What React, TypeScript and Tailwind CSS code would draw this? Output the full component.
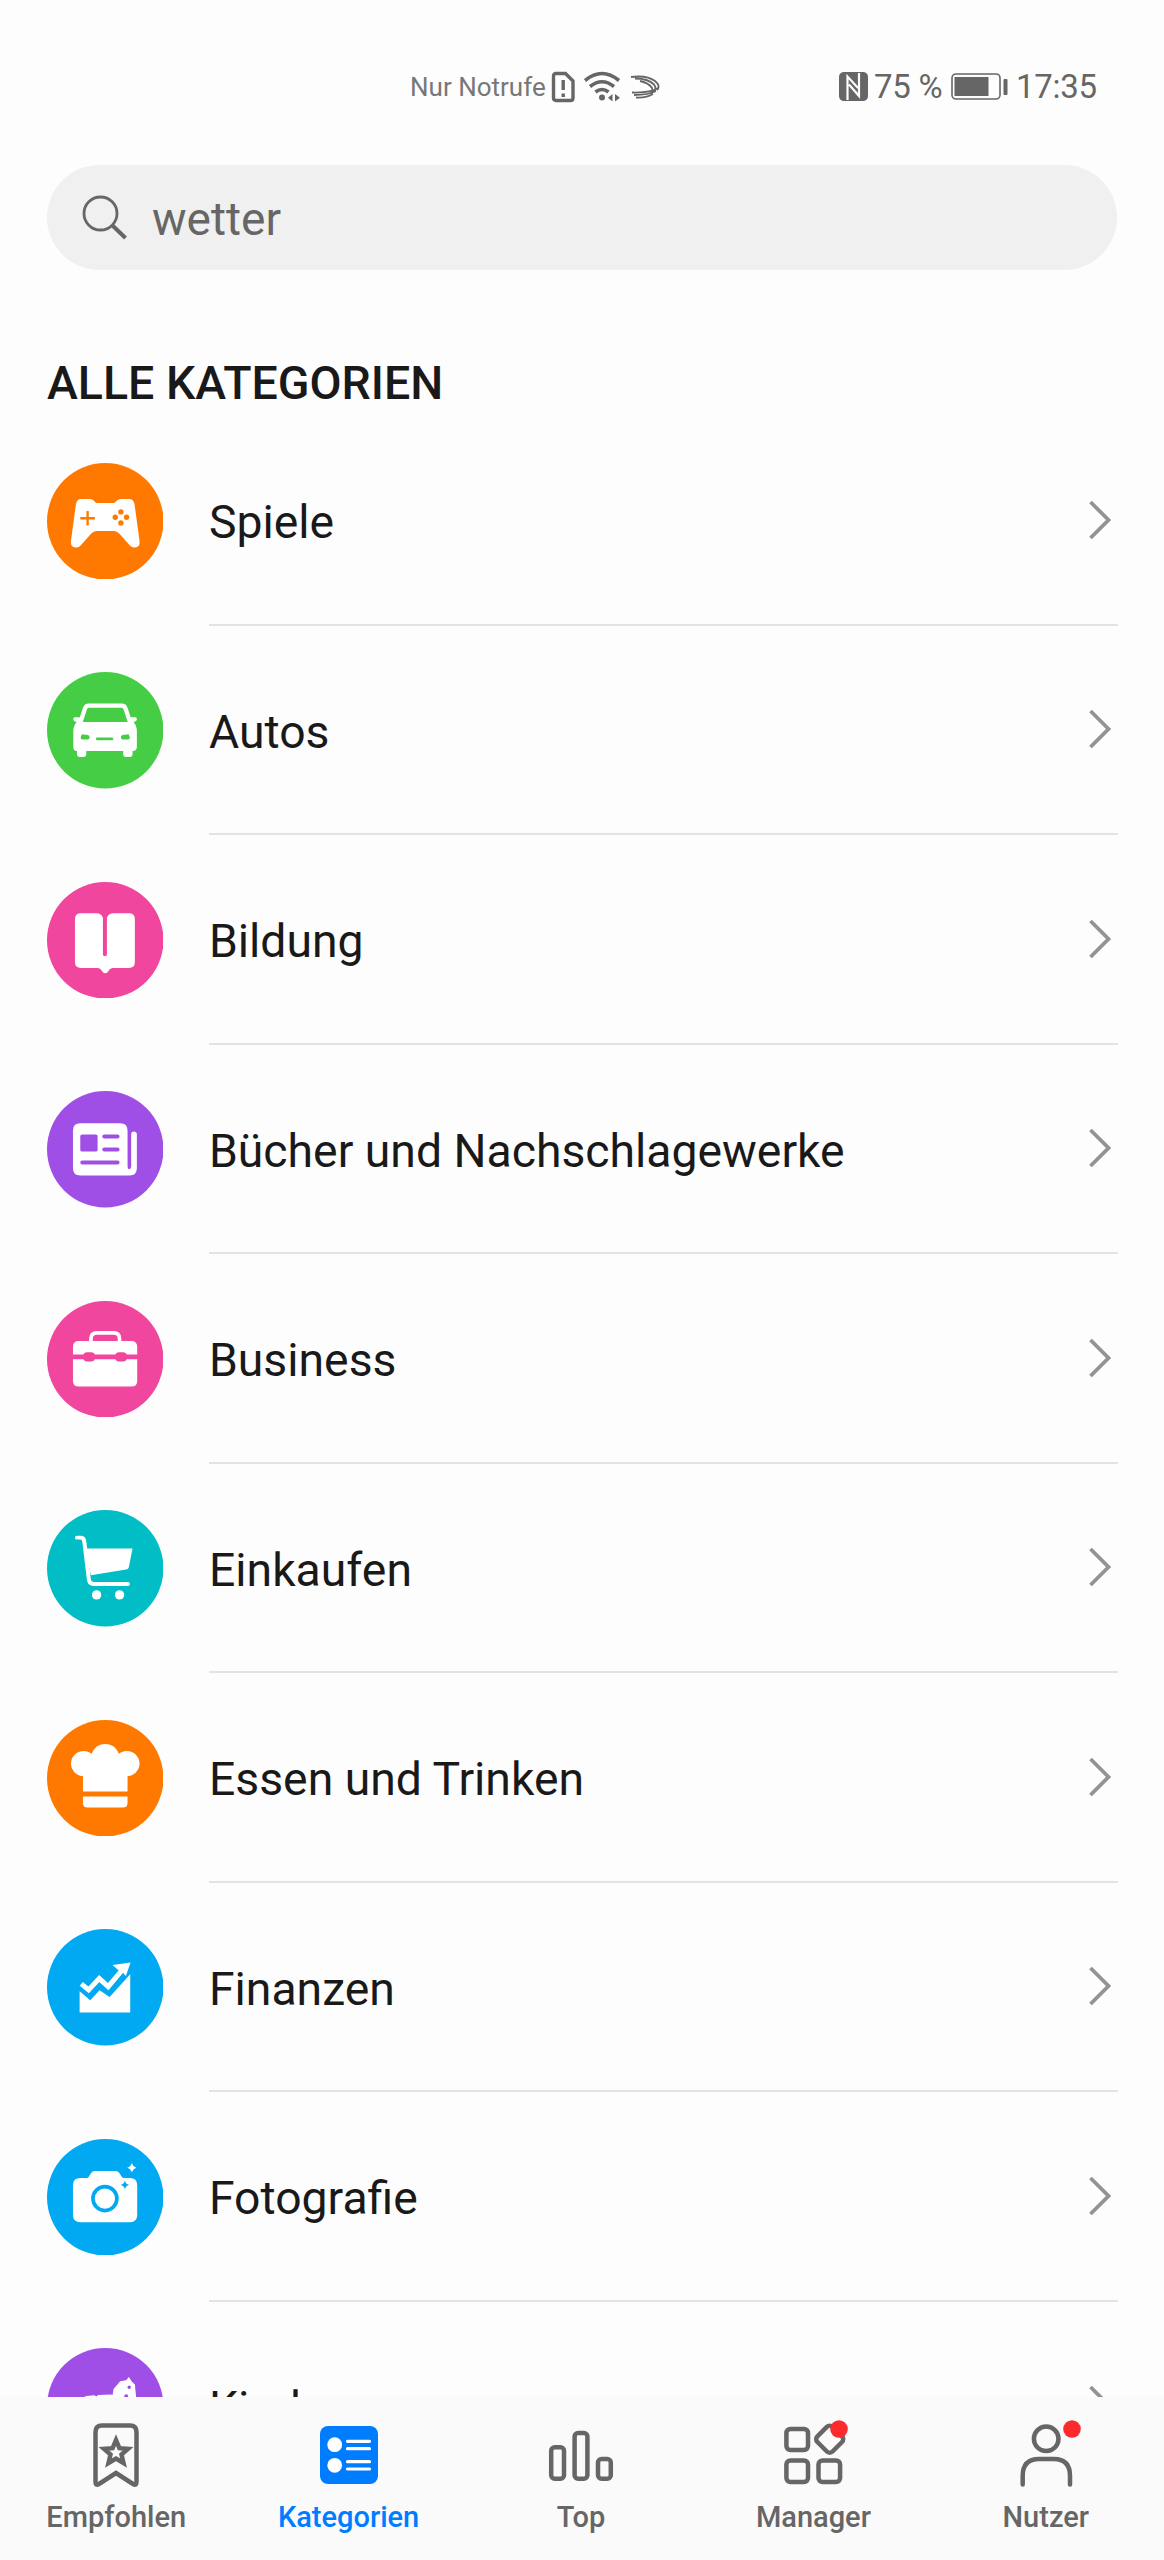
import React from "react";

type Category = {
  name: string;
  color: string;
  icon: React.ReactNode;
};

const categories: Category[] = [
  {
    name: "Spiele",
    color: "text-[#ff7900]",
    icon: (
      <>
        <path
          fill="#fff"
          d="M102 108h28q8 0 13 8q2 4 7 4h50q5 0 7-4q5-8 13-8h26q14 0 17 16l15 110q2 20-16 20-8 0-13-6l-32-36q-7-8-15-8h-54q-8 0-15 8l-32 36q-5 6-13 6-18 0-16-20l15-110q3-16 15-16z"
        />
        <path d="M100 166h44M122 144v44" stroke="currentColor" strokeWidth="7" />
        <g fill="currentColor">
          <circle cx="222" cy="147" r="8" />
          <circle cx="205" cy="163" r="8" />
          <circle cx="239" cy="163" r="8" />
          <circle cx="222" cy="180" r="8" />
        </g>
      </>
    ),
  },
  {
    name: "Autos",
    color: "text-[#46cd46]",
    icon: (
      <>
        <path
          d="M100 152l14-42q3-9 11-9h100q8 0 11 9l14 42"
          fill="none"
          stroke="#fff"
          strokeWidth="13"
        />
        <path
          fill="#fff"
          d="M84 136h14l4 14h146l4-14h14q4 0 4 5t-4 7l-6 3q10 10 10 28v46q0 12-13 12v11q0 7-7 7h-14q-7 0-7-7v-11H118v11q0 7-7 7H97q-7 0-7-7v-11q-11 0-11-12v-46q0-18 10-28l-6-3q-4-2-4-7t5-5z"
        />
        <path fill="currentColor" d="M105 187l18 2q5 1 5 7t-5 7h-16q-6 0-6-7zM245 187l-18 2q-5 1-5 7t5 7h16q6 0 6-7z" />
        <path d="M151 201h44" stroke="currentColor" strokeWidth="8" strokeLinecap="round" />
      </>
    ),
  },
  {
    name: "Bildung",
    color: "text-[#f0469e]",
    icon: (
      <path
        fill="#fff"
        d="M102 94h46q16 0 20 14v109q0 6 6 6t6-6v-109q4-14 20-14h46q18 0 18 18v128q0 18-18 18h-48q-7 0-10 5l-6 8q-7 7-14 0l-6-8q-3-5-10-5h-50q-18 0-18-18v-128q0-18 18-18z"
      />
    ),
  },
  {
    name: "Bücher und Nachschlagewerke",
    color: "text-[#9f4fe6]",
    icon: (
      <>
        <path
          fill="#fff"
          d="M100 97h120q22 0 22 22v108q0 8 5 8t6-8v-97q0-8 8-8t9 8v102q0 22-22 22h-148q-22 0-22-22v-113q0-22 22-22z"
        />
        <rect x="100" y="131" width="52" height="51" rx="5" fill="currentColor" />
        <path
          d="M172 137h40M172 176h40M106 215h106"
          stroke="currentColor"
          strokeWidth="12"
          strokeLinecap="round"
        />
      </>
    ),
  },
  {
    name: "Business",
    color: "text-[#f0469e]",
    icon: (
      <>
        <path
          d="M132 124v-10q0-18 18-18h50q18 0 18 18v10"
          fill="none"
          stroke="#fff"
          strokeWidth="11"
        />
        <path fill="#fff" d="M96 120h157q18 0 18 18v23H78v-23q0-18 18-18z" />
        <path fill="#fff" d="M78 175h193v65q0 17-17 17H95q-17 0-17-17z" />
        <rect x="109" y="154" width="35" height="28" rx="12" fill="currentColor" />
        <rect x="205" y="154" width="35" height="28" rx="12" fill="currentColor" />
      </>
    ),
  },
  {
    name: "Einkaufen",
    color: "text-[#00bdc6]",
    icon: (
      <>
        <path
          d="M90 83h10q11 0 12 11l14 116q2 12 14 12h103"
          fill="none"
          stroke="#fff"
          strokeWidth="12"
          strokeLinecap="round"
        />
        <path fill="#fff" d="M114 116h143l-11 55q-1 7-8 8l-106 17z" />
        <circle cx="149" cy="255" r="14" fill="#fff" />
        <circle cx="218" cy="255" r="14" fill="#fff" />
      </>
    ),
  },
  {
    name: "Essen und Trinken",
    color: "text-[#ff7900]",
    icon: (
      <g fill="#fff">
        <circle cx="110" cy="131" r="38" />
        <circle cx="175" cy="115" r="43" />
        <circle cx="240" cy="131" r="38" />
        <path d="M108 130h134v85H108z" />
        <path d="M108 230h134v19q0 14-14 14H122q-14 0-14-14z" />
      </g>
    ),
  },
  {
    name: "Finanzen",
    color: "text-[#00a9f1]",
    icon: (
      <>
        <path
          d="M103 165l22 18 32-34 27 24 47-56"
          fill="none"
          stroke="#fff"
          strokeWidth="15"
        />
        <path fill="#fff" d="M197 108l54-7-14 40-12-13-13-6z" />
        <path fill="#fff" d="M98 187l32 27 28-30 30 20 62-68v115H98z" />
      </>
    ),
  },
  {
    name: "Fotografie",
    color: "text-[#00a9f1]",
    icon: (
      <>
        <path
          fill="#fff"
          d="M100 117h20q4 0 6-4l6-10q4-7 13-7h60q9 0 13 7l6 10q2 4 6 4h19q22 0 22 22v89q0 22-22 22H100q-22 0-22-22v-89q0-22 22-22z"
        />
        <circle cx="174" cy="179" r="36" fill="none" stroke="currentColor" strokeWidth="11" />
        <path fill="#fff" d="M255 71q3 12 14 15q-11 3-14 15q-3-12-14-15q11-3 14-15z" />
        <path fill="currentColor" d="M234 124q2 12 13 14q-11 2-13 14q-2-12-13-14q11-2 13-14z" />
      </>
    ),
  },
  {
    name: "Kinder",
    color: "text-[#9f4fe6]",
    icon: (
      <>
        <path
          fill="#fff"
          d="M110 148l8-4 24-2 6 4 6-5 38-1 5 1 3-18 20-23 18-3 8-10 8 13 10 10 4 40v60H105z"
        />
        <circle cx="247" cy="118" r="5" fill="currentColor" />
        <circle cx="238" cy="145" r="6" fill="currentColor" />
      </>
    ),
  },
];

const tabs = [
  {
    label: "Empfohlen",
    icon: (
      <>
        <path d="M19 3.5h28q6.5 0 6.5 6.5v50q0 4-3.5 2L33 51 16 62q-3.5 2-3.5-2V10q0-6.5 6.5-6.5z" />
        <path d="M33 18l3.4 8.2 8.6.6-6.5 5.8 2 8.4-7.5-4.5-7.5 4.5 2-8.4-6.5-5.8 8.6-.6z" />
      </>
    ),
  },
  {
    label: "Kategorien",
    active: true,
    icon: (
      <>
        <rect x="4" y="4" width="58" height="58" rx="8" fill="currentColor" stroke="none" />
        <circle cx="18.7" cy="22.7" r="7.4" fill="#fff" stroke="none" />
        <circle cx="18.7" cy="43.3" r="7.4" fill="#fff" stroke="none" />
        <path
          d="M31.5 19.3h22M31.5 26.7h22M31.5 39.7h22M31.5 47h22"
          stroke="#fff"
          strokeWidth="3.2"
        />
      </>
    ),
  },
  {
    label: "Top",
    icon: (
      <>
        <rect x="3.2" y="25.3" width="12.8" height="31.4" rx="3.5" />
        <rect x="26.6" y="11" width="12.8" height="45.7" rx="3.5" />
        <rect x="50" y="37" width="12.8" height="19.7" rx="3.5" />
      </>
    ),
  },
  {
    label: "Manager",
    badge: true,
    icon: (
      <>
        <rect x="6.4" y="6.9" width="21.6" height="21.2" rx="4" />
        <rect x="6.4" y="38.5" width="21.6" height="21.6" rx="4" />
        <rect x="38.5" y="38.5" width="21.6" height="21.6" rx="4" />
        <rect x="39" y="6.5" width="21.4" height="21.4" rx="4" transform="rotate(45 49.7 17.2)" />
      </>
    ),
  },
  {
    label: "Nutzer",
    badge: true,
    icon: (
      <>
        <circle cx="33.2" cy="16.8" r="12.3" />
        <path d="M9.7 62.5V54Q9.7 37 26 37h14.8Q57 37 57 54v8.5" />
      </>
    ),
  },
];

function StatusBar() {
  return (
    <div className="flex h-[165px] shrink-0 items-center pt-[8px] pl-[410px] text-[#666]">
      <span className="w-[141px] text-[26px] leading-none whitespace-nowrap text-[#777]">
        Nur Notrufe
      </span>
      <svg width="24" height="32" viewBox="0 0 24 32" fill="none" stroke="currentColor">
        <path d="M5 2.5h9.5L22 10v17q0 2.5-2.5 2.5H5q-2.5 0-2.5-2.5V5q0-2.5 2.5-2.5z" strokeWidth="3.4" />
        <path d="M12.2 9v10M12.2 22.5V26" strokeWidth="3.4" />
      </svg>
      <svg
        className="ml-[9px]"
        width="37"
        height="32"
        viewBox="0 0 37 32"
        fill="none"
        stroke="currentColor"
        strokeWidth="3.6"
      >
        <path d="M1 9.500q17-14 34 0M6 15.500q12-9.500 24 0M11.500 21q6.500-5 13 0" />
        <circle cx="18" cy="26.500" r="3" fill="currentColor" stroke="none" />
        <path d="M28.500 23v7.500l-4.500-3.700zM31 23v7.500l5-3.700z" fill="currentColor" stroke="none" />
      </svg>
      {/* swallow-shaped vendor mark */}
      <svg
        className="ml-[9px]"
        width="31"
        height="24"
        viewBox="0 0 31 24"
        fill="none"
        stroke="currentColor"
        strokeWidth="1.8"
      >
        <path d="M1 2q16-2 24 4 6 5 2 9M5 3.500q13 0 19 6 3 4 0 7M10 6q9 2 12 7 1 3-1 5" />
        <path d="M28 13q-7 5-26 4.500M26 16q-7 4-22 4M23 19q-6 4-17 3.500" />
      </svg>
      <div className="ml-[177px] flex items-center text-[33px] leading-none whitespace-nowrap">
        <svg width="31" height="31" viewBox="0 0 31 31">
          <path fill="currentColor" d="M5 1h21q4 1 4 5v19q0 4-4 5H5q-4-1-4-5V6q0-4 4-5z" />
          <path
            d="M9.500 29V5.500L20 17M21 2v23L11 13.500"
            fill="none"
            stroke="#fdfdfd"
            strokeWidth="2.200"
          />
        </svg>
        <span className="ml-[5px] w-[76px] tracking-[-0.3px]">75 %</span>
        <svg className="ml-[1px]" width="57" height="28" viewBox="0 0 57 28">
          <rect x="1" y="1" width="48" height="25" rx="4" fill="none" stroke="currentColor" strokeWidth="1.6" />
          <rect x="3.5" y="4" width="34" height="19" fill="currentColor" />
          <rect x="52.5" y="6" width="4" height="16" rx="1" fill="currentColor" />
        </svg>
        <span className="ml-[8px] tracking-[-0.3px]">17:35</span>
      </div>
    </div>
  );
}

function Chevron() {
  return (
    <svg width="26" height="42" viewBox="0 0 26 42" fill="none" stroke="#939393" strokeWidth="3.8">
      <path d="M2.500 3l18 18-18 18" />
    </svg>
  );
}

function App() {
  return (
    <div className="flex h-[2560px] w-[1164px] flex-col overflow-hidden bg-[#fdfdfd] font-[Roboto,sans-serif]">
      <StatusBar />

      <div className="mx-[47px] flex h-[105px] shrink-0 items-center rounded-full bg-[#f0f0f0] pl-[35px] text-[#666]">
        <svg width="46" height="46" viewBox="0 0 46 46" fill="none" stroke="currentColor">
          <circle cx="18.5" cy="18.5" r="16.5" strokeWidth="2.8" />
          <path d="M30.5 30.5l13 12.5" strokeWidth="4" />
        </svg>
        <span className="ml-[24px] pt-[3px] text-[46px] leading-none">wetter</span>
      </div>

      <h1 className="mx-[47px] flex h-[146px] shrink-0 items-end pb-[10px] text-[46.5px] leading-none font-medium text-[#191919]">
        ALLE KATEGORIEN
      </h1>

      <ul className="min-h-0 flex-1 overflow-hidden px-[46.5px]">
        {categories.map((category) => (
          <li key={category.name} className="flex h-[209.5px] items-center gap-[46px]">
            <svg
              className={`size-[116.5px] shrink-0 ${category.color}`}
              viewBox="0 0 350 350"
            >
              <circle cx="175" cy="175" r="175" fill="currentColor" />
              {category.icon}
            </svg>
            <div className="flex h-full flex-1 items-center justify-between border-b-2 border-[#e3e3e3] pr-[4px]">
              <span className="pt-[5px] text-[46.3px] leading-none text-[#191919]">
                {category.name}
              </span>
              <Chevron />
            </div>
          </li>
        ))}
      </ul>

      <nav className="grid h-[163px] shrink-0 grid-cols-5 bg-[#fafafa] pt-[25px] pr-[2px]">
        {tabs.map((tab) => (
          <div
            key={tab.label}
            className={`flex flex-col items-center ${tab.active ? "text-[#007dff]" : "text-[#666]"}`}
          >
            <svg
              className="overflow-visible"
              width="66"
              height="66"
              viewBox="0 0 66 66"
              fill="none"
              stroke="currentColor"
              strokeWidth="4.5"
              strokeLinecap="round"
            >
              {tab.icon}
              {tab.badge && <circle cx="59" cy="7" r="8.8" fill="#fb2a2d" stroke="none" />}
            </svg>
            <span className="mt-[15px] text-[29px] leading-none font-medium">{tab.label}</span>
          </div>
        ))}
      </nav>
    </div>
  );
}

export default App;
